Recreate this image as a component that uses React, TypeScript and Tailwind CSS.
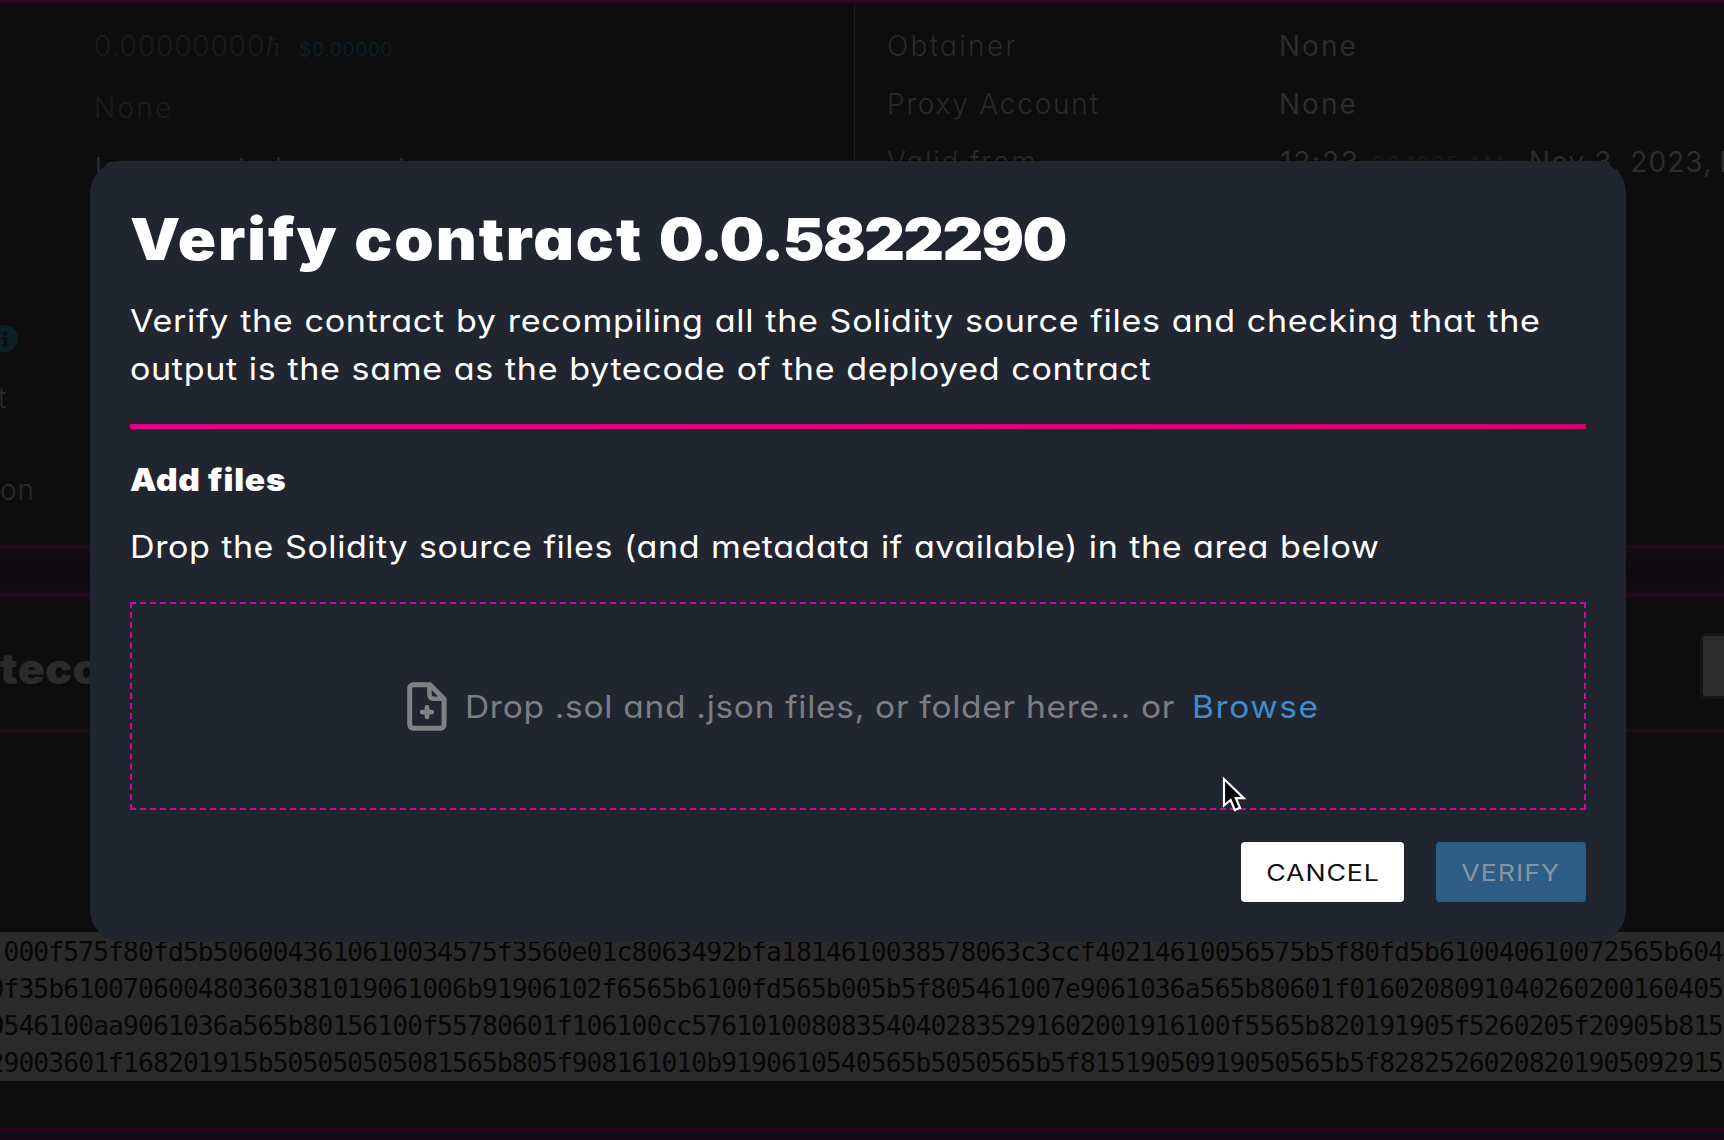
const BYTECODE = [
  " 000f575f80fd5b5060043610610034575f3560e01c8063492bfa1814610038578063c3ccf40214610056575b5f80fd5b610040610072565b604",
  "0f35b610070600480360381019061006b91906102f6565b6100fd565b005b5f805461007e9061036a565b80601f0160208091040260200160405",
  "0546100aa9061036a565b80156100f55780601f106100cc576101008083540402835291602001916100f5565b820191905f5260205f20905b815",
  "29003601f168201915b505050505081565b805f908161010b9190610540565b5050565b5f81519050919050565b5f82825260208201905092915",
];

function FilePlusIcon() {
  return (
    <svg width="40" height="49" viewBox="0 0 40 49" fill="none" stroke="#808182" strokeWidth="5" strokeLinejoin="round" strokeLinecap="round" className="shrink-0">
      <path d="M23 2.8H6.3a3.6 3.6 0 0 0-3.6 3.6v36.2a3.6 3.6 0 0 0 3.6 3.6h27.2a3.6 3.6 0 0 0 3.6-3.6V17z" />
      <path d="M22.4 4v8.6a4.2 4.2 0 0 0 4.2 4.2H36" strokeWidth="4.6" />
      <path d="M20 25.3v9.6M15.2 30.1h9.6" strokeWidth="4.8" />
    </svg>
  );
}

function Cursor() {
  return (
    <svg width="28" height="42" viewBox="0 0 28 42" className="absolute left-[1221px] top-[773px]">
      <path d="M3 6V32.5L9.6 27l4.2 10 5.2-2.2-4.2-9.6h8z" fill="#000" stroke="#fff" strokeWidth="2.2" />
    </svg>
  );
}

function Page() {
  return (
    <div className="flex h-full flex-col overflow-hidden whitespace-nowrap text-[28px] leading-[40px]">
      <div className="h-[3px] shrink-0 bg-[#2a081f]" />
      <div className="flex h-[542px] shrink-0">
        <div className="w-[855px] shrink-0 border-r border-[#1f1f1f] pt-[23px]">
          <div className="flex h-[40px] items-baseline pl-[94px] font-light text-[#1c1c1c]">
            <span className="tracking-[0.9px]">0.00000000</span>
            <span className="font-['DejaVu_Serif'] text-[25px] italic">ℏ</span>
            <span className="ml-[18px] text-[19px] tracking-[0.9px] text-[#0b222c]">$0.00000</span>
          </div>
          <div className="mt-[22px] pl-[94px] font-light tracking-[2.2px] text-[#1c1c1c]">None</div>
          <div className="mt-[20px] pl-[95px] tracking-[1.2px] text-[#2b2b2b]">lean user to be seen to</div>
          <div className="-ml-[9px] mt-[137px] flex size-[27px] items-center justify-center rounded-full bg-[#0c2029]">
            <svg width="8" height="16" viewBox="0 0 8 16" fill="#0e0e0e">
              <circle cx="4" cy="2.4" r="2.2" />
              <path d="M1 6h4.7v7.2h1.6v2.3H.7v-2.3h1.6V8.3H1z" />
            </svg>
          </div>
          <div className="-ml-[2px] mt-[26px] font-light text-[#2b2b2b]">t</div>
          <div className="mt-[52px] font-light tracking-[1px] text-[#2b2b2b]">on</div>
        </div>
        <div className="flex flex-col gap-[18px] pl-[32px] pt-[23px] font-light text-[#292929]">
          <div className="flex">
            <span className="w-[392px] tracking-[2.3px]">Obtainer</span>
            <span className="font-normal tracking-[2px] text-[#2c2c2c]">None</span>
          </div>
          <div className="flex">
            <span className="w-[392px] tracking-[1.8px]">Proxy Account</span>
            <span className="font-normal tracking-[2px] text-[#2c2c2c]">None</span>
          </div>
          <div className="flex items-baseline font-normal text-[#2c2c2c]">
            <span className="w-[393px] font-light tracking-[1.8px] text-[#292929]">Valid from</span>
            <span className="w-[84px] tracking-[1.8px]">12:23</span>
            <span className="w-[165px] text-[22px] font-light tracking-[1.4px] text-[#1b1b1b]">:06.1965 AM</span>
            <span className="tracking-[1.1px]">Nov 3, 2023,<span className="-ml-[2px]"> PST</span></span>
          </div>
        </div>
      </div>
      <div className="h-[52px] shrink-0 border-y-[3px] border-[#26081c] bg-linear-to-b from-[#150b15] via-[#0c0a0d] to-[#150b15]" />
      <div className="flex h-[135px] shrink-0 items-center justify-between border-b-[3px] border-[#26081c]">
        <span className="origin-left scale-x-[1.06] pt-[12px] text-[42px] font-black tracking-[0.4px] text-[#2b2b2b]">tecode</span>
        <div className="mt-[6px] h-[66px] w-[24px] rounded-l-[6px] border-y-[3px] border-l-[3px] border-[#161616] bg-[#2b2b2b]" />
      </div>
      <div className="mt-[200px] h-[149px] shrink-0 bg-[#2a2a2a] pt-[2px] font-['DejaVu_Sans_Mono',monospace] text-[26.3px] leading-[37px] tracking-[-0.879px] text-[#070707]">
        {BYTECODE.map((row) => (
          <div key={row} className="-ml-[11.5px] whitespace-pre">{row}</div>
        ))}
      </div>
      <div className="mt-[47px] h-[12px] shrink-0 border-t-[3px] border-[#240819] bg-[#130b13]" />
    </div>
  );
}

function VerifyDialog() {
  return (
    <div className="absolute left-[90px] top-[161px] flex h-[781px] w-[1536px] flex-col whitespace-nowrap rounded-[32px] bg-[#212530] px-[40px] pt-[46px] text-[31px] leading-[48px] text-white">
      <h1 className="w-max origin-left scale-x-[1.09] text-[58px] font-black leading-[64px] tracking-[1.75px] [word-spacing:1px]">
        Verify contract <span className="tracking-[-1.6px]">0.0.5822290</span>
      </h1>
      <p className="mt-[26px] w-max origin-left scale-x-[1.1]">
        <span className="block tracking-[0.6px] [word-spacing:0.8px]">Verify the contract by recompiling all the Solidity source files and checking that the</span>
        <span className="block tracking-[0.57px] [word-spacing:0.8px]">output is the same as the bytecode of the deployed contract</span>
      </p>
      <div className="mt-[31px] h-[5px] shrink-0 bg-linear-to-r from-[#e4008a] to-[#d40068]" />
      <h2 className="mt-[31px] w-max origin-left scale-x-[1.08] font-black leading-[40px] tracking-[0.7px]">Add files</h2>
      <p className="mt-[23px] w-max origin-left scale-x-[1.1] tracking-[0.47px] [word-spacing:0.8px]">Drop the Solidity source files (and metadata if available) in the area below</p>
      <div className="mt-[31px] flex h-[208px] shrink-0 items-center border-2 border-dashed border-[#c80ca0] pl-[275px] text-[#7d7e81]">
        <FilePlusIcon />
        <span className="ml-[18px] w-[727px] pt-[2px]">
          <span className="inline-block origin-left scale-x-[1.08] tracking-[0.66px]">Drop .sol and .json files, or folder here... or</span>
        </span>
        <span className="origin-left scale-x-[1.08] pt-[2px] tracking-[1.5px] text-[#3f8ccc]">Browse</span>
      </div>
      <div className="mt-[32px] flex justify-end gap-[32px] text-[23px]">
        <button className="h-[60px] w-[163px] rounded-[4px] bg-white pt-px text-[#111]">
          <span className="inline-block scale-x-[1.16] tracking-[0.8px]">CANCEL</span>
        </button>
        <button className="h-[60px] w-[150px] rounded-[4px] bg-[#2d5c84] pt-px text-[#8795a3]">
          <span className="inline-block scale-x-[1.16] tracking-[0.9px]">VERIFY</span>
        </button>
      </div>
    </div>
  );
}

export default function App() {
  return (
    <main className="relative h-[1140px] w-[1724px] overflow-hidden bg-[#0d0d0d] font-['Inter',sans-serif] [font-feature-settings:'cv11']">
      <Page />
      <VerifyDialog />
      <Cursor />
    </main>
  );
}
